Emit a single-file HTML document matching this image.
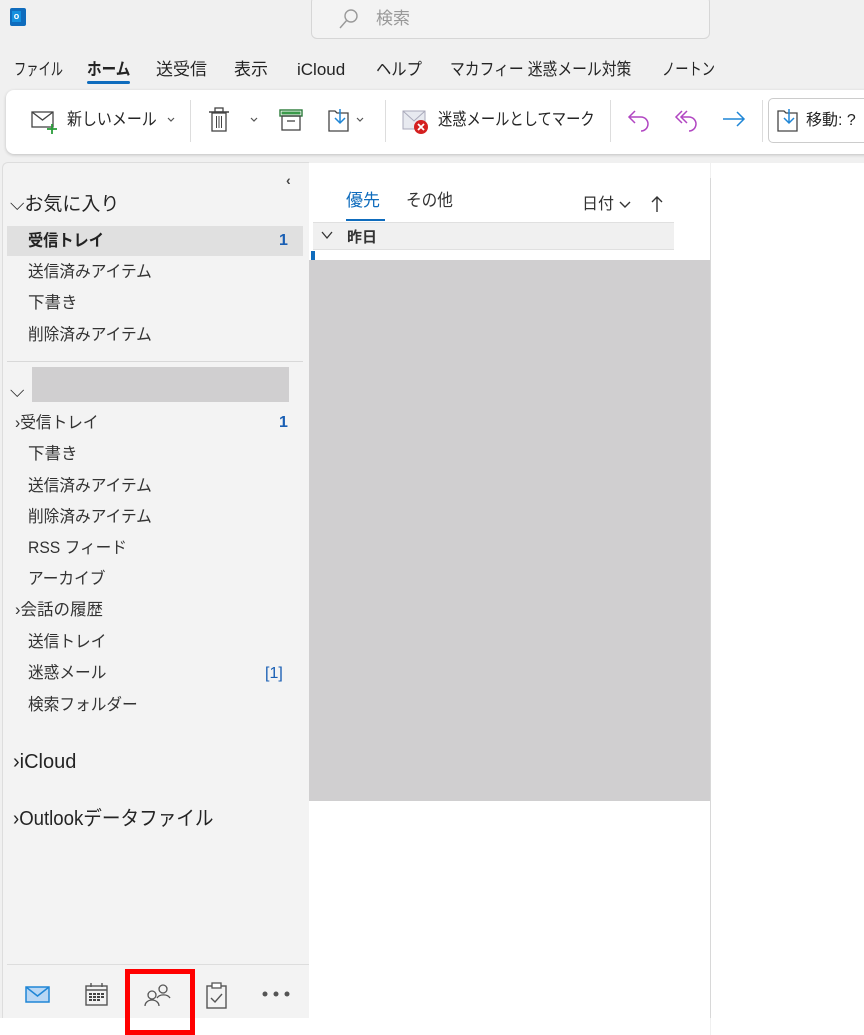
<!DOCTYPE html>
<html><head><meta charset="utf-8">
<style>
*{margin:0;padding:0;box-sizing:border-box}
body{width:864px;height:1035px;background:#f0f0f0;position:relative;overflow:hidden;font-family:"Liberation Sans","Noto Sans CJK JP",sans-serif;color:#242424}
.a{position:absolute;white-space:nowrap;line-height:20px}
.f{font-size:17px;transform-origin:0 0}
.fl{font-size:16.5px;color:#333;transform-origin:0 0}
.cnt{color:#1a5fb4;font-weight:bold;font-size:16px}
</style></head><body>
<div class="a" style="left:10px;top:8px;width:16px;height:18px;background:#0f6cbd;border-radius:2px"></div>
<div class="a" style="left:12px;top:11px;width:9px;height:11px;background:#1490df;color:#fff;font-size:9px;font-weight:bold;text-align:center;line-height:11px">o</div>
<div class="a" style="left:311px;top:-4px;width:399px;height:43px;background:#f3f3f3;border:1px solid #d6d6d6;border-radius:6px"></div>
<svg class="a" style="left:338px;top:8px" width="22" height="22"><circle cx="13" cy="8" r="6" fill="none" stroke="#999" stroke-width="1.4"/><line x1="9" y1="12" x2="2" y2="20" stroke="#999" stroke-width="1.4"/></svg>
<div class="a" style="left:376px;top:9px;font-size:17px;color:#999">検索</div>
<div class="a f" style="left:14px;top:60px;transform:scaleX(.72)">ファイル</div>
<div class="a f" style="left:87px;top:60px;font-weight:bold;transform:scaleX(.86)">ホーム</div>
<div class="a" style="left:87px;top:81px;width:43px;height:3px;background:#0f6cbd;border-radius:2px"></div>
<div class="a f" style="left:156px;top:60px">送受信</div>
<div class="a f" style="left:234px;top:60px">表示</div>
<div class="a f" style="left:297px;top:60px">iCloud</div>
<div class="a f" style="left:376px;top:60px;transform:scaleX(.9)">ヘルプ</div>
<div class="a f" style="left:450px;top:60px;transform:scaleX(.87)">マカフィー 迷惑メール対策</div>
<div class="a f" style="left:662px;top:60px;transform:scaleX(.78)">ノートン</div>
<div class="a" style="left:6px;top:90px;width:870px;height:64px;background:#fff;border-radius:8px;box-shadow:0 1px 3px rgba(0,0,0,.2)"></div>
<svg class="a" style="left:30px;top:109px" width="28" height="26"><rect x="2" y="3" width="21" height="15" fill="none" stroke="#444" stroke-width="1.3"/><polyline points="2,3 12.5,11 23,3" fill="none" stroke="#444" stroke-width="1.3"/><line x1="22" y1="15" x2="22" y2="25" stroke="#2a9d3a" stroke-width="1.8"/><line x1="17" y1="20" x2="27" y2="20" stroke="#2a9d3a" stroke-width="1.8"/></svg>
<div class="a f" style="left:67px;top:110px;transform:scaleX(.88)">新しいメール</div>
<svg class="a" style="left:166px;top:116px" width="10" height="8"><polyline points="2,2 5,5 8,2" fill="none" stroke="#555" stroke-width="1.2"/></svg>
<div class="a" style="left:190px;top:100px;width:1px;height:42px;background:#ddd"></div>
<svg class="a" style="left:207px;top:107px" width="24" height="26"><line x1="2" y1="5" x2="22" y2="5" stroke="#444" stroke-width="1.4"/><rect x="8" y="1" width="8" height="4" fill="none" stroke="#444" stroke-width="1.3"/><rect x="5" y="6" width="14" height="18" fill="none" stroke="#444" stroke-width="1.3"/><line x1="9.5" y1="9" x2="9.5" y2="21" stroke="#444"/><line x1="12" y1="9" x2="12" y2="21" stroke="#444"/><line x1="14.5" y1="9" x2="14.5" y2="21" stroke="#444"/></svg>
<svg class="a" style="left:249px;top:116px" width="10" height="8"><polyline points="2,2 5,5 8,2" fill="none" stroke="#555" stroke-width="1.2"/></svg>
<svg class="a" style="left:278px;top:108px" width="26" height="24"><rect x="2" y="2" width="22" height="6" fill="#fff" stroke="#2a7a3a" stroke-width="1.4"/><rect x="3.5" y="3.5" width="19" height="3" fill="#3a9a4a"/><rect x="4" y="8" width="18" height="14" fill="none" stroke="#444" stroke-width="1.3"/><line x1="9" y1="13" x2="17" y2="13" stroke="#444" stroke-width="1.3"/></svg>
<svg class="a" style="left:326px;top:106px" width="26" height="28"><path d="M3 5h6l2 2h11v18H3z" fill="none" stroke="#444" stroke-width="1.3"/><line x1="14" y1="3" x2="14" y2="17" stroke="#1f86d6" stroke-width="1.5"/><polyline points="9,12 14,17 19,12" fill="none" stroke="#1f86d6" stroke-width="1.5"/></svg>
<svg class="a" style="left:355px;top:116px" width="10" height="8"><polyline points="2,2 5,5 8,2" fill="none" stroke="#555" stroke-width="1.2"/></svg>
<div class="a" style="left:385px;top:100px;width:1px;height:42px;background:#ddd"></div>
<svg class="a" style="left:401px;top:107px" width="30" height="28"><path d="M2 4h22v18H2z" fill="#e8eaf0" stroke="#aab" /><polyline points="2,4 13,14 24,4" fill="none" stroke="#aab"/><circle cx="20" cy="20" r="7" fill="#d42020"/><path d="M17 17l6 6M23 17l-6 6" stroke="#fff" stroke-width="1.8"/></svg>
<div class="a f" style="left:438px;top:110px;transform:scaleX(.84)">迷惑メールとしてマーク</div>
<div class="a" style="left:610px;top:100px;width:1px;height:42px;background:#ddd"></div>
<svg class="a" style="left:626px;top:107px" width="28" height="26"><path d="M9 4L3 10l6 6" fill="none" stroke="#b146c2" stroke-width="1.5"/><path d="M3 10h12a7 7 0 0 1 0 14" fill="none" stroke="#b146c2" stroke-width="1.5"/></svg>
<svg class="a" style="left:672px;top:107px" width="30" height="26"><path d="M10 4L4 10l6 6M15 4L9 10l6 6" fill="none" stroke="#b146c2" stroke-width="1.5"/><path d="M9 10h8a7 7 0 0 1 0 14" fill="none" stroke="#b146c2" stroke-width="1.5"/></svg>
<svg class="a" style="left:720px;top:107px" width="28" height="26"><path d="M3 12h21M17 5l7 7-7 7" fill="none" stroke="#1f86d6" stroke-width="1.5"/></svg>
<div class="a" style="left:762px;top:100px;width:1px;height:42px;background:#ddd"></div>
<div class="a" style="left:768px;top:98px;width:110px;height:45px;border:1px solid #ccc;border-radius:5px"></div>
<svg class="a" style="left:775px;top:106px" width="26" height="28"><path d="M3 5h6l2 2h11v18H3z" fill="none" stroke="#444" stroke-width="1.3"/><line x1="14" y1="3" x2="14" y2="17" stroke="#1f86d6" stroke-width="1.5"/><polyline points="9,12 14,17 19,12" fill="none" stroke="#1f86d6" stroke-width="1.5"/></svg>
<div class="a" style="left:806px;top:111px;font-size:16px">移動: ?</div>
<div class="a" style="left:2px;top:162px;width:307px;height:856px;background:#f3f3f3;border-radius:6px 0 0 0;border-left:1px solid #ddd;border-top:1px solid #ddd"></div>
<div class="a" style="left:0;top:1018px;width:309px;height:17px;background:#fff"></div>
<div class="a" style="left:286px;top:170px;font-size:14px;color:#444;font-weight:bold">&#8249;</div>
<div class="a" style="left:10px;top:195px;font-size:19px">⌵お気に入り</div>
<div class="a" style="left:7px;top:226px;width:296px;height:30px;background:#e0e0e0"></div>
<div class="a fl" style="left:28px;top:231px;font-weight:bold;color:#222;transform:scaleX(.92)">受信トレイ</div>
<div class="a cnt" style="left:279px;top:231px">1</div>
<div class="a fl" style="left:28px;top:262px;transform:scaleX(.95)">送信済みアイテム</div>
<div class="a fl" style="left:28px;top:293px">下書き</div>
<div class="a fl" style="left:28px;top:325px;transform:scaleX(.95)">削除済みアイテム</div>
<div class="a" style="left:7px;top:361px;width:296px;height:1px;background:#d8d8d8"></div>
<div class="a" style="left:10px;top:382px;font-size:19px">⌵</div>
<div class="a" style="left:32px;top:367px;width:257px;height:35px;background:#d0cfd0"></div>
<div class="a fl" style="left:15px;top:413px;transform:scaleX(.95)">›受信トレイ</div>
<div class="a cnt" style="left:279px;top:413px">1</div>
<div class="a fl" style="left:28px;top:444px">下書き</div>
<div class="a fl" style="left:28px;top:476px;transform:scaleX(.95)">送信済みアイテム</div>
<div class="a fl" style="left:28px;top:507px;transform:scaleX(.95)">削除済みアイテム</div>
<div class="a fl" style="left:28px;top:538px;transform:scaleX(.95)">RSS フィード</div>
<div class="a fl" style="left:28px;top:569px;transform:scaleX(.95)">アーカイブ</div>
<div class="a fl" style="left:15px;top:600px">›会話の履歴</div>
<div class="a fl" style="left:28px;top:632px;transform:scaleX(.95)">送信トレイ</div>
<div class="a fl" style="left:28px;top:663px;transform:scaleX(.95)">迷惑メール</div>
<div class="a" style="left:265px;top:664px;color:#1a5fb4;font-size:16px">[1]</div>
<div class="a fl" style="left:28px;top:695px;transform:scaleX(.95)">検索フォルダー</div>
<div class="a" style="left:13px;top:752px;font-size:20px">›iCloud</div>
<div class="a" style="left:13px;top:809px;font-size:20px;transform:scaleX(.93);transform-origin:0 0">›Outlookデータファイル</div>
<div class="a" style="left:7px;top:964px;width:302px;height:1px;background:#ddd"></div>
<svg class="a" style="left:25px;top:985px" width="26" height="20"><rect x="1" y="2" width="23" height="15" fill="#b9d7f4" stroke="#1f86d6" stroke-width="1.5"/><polyline points="1,2 12.5,11 24,2" fill="none" stroke="#1f86d6" stroke-width="1.5"/></svg>
<svg class="a" style="left:84px;top:982px" width="26" height="26"><rect x="2" y="4" width="21" height="19" fill="none" stroke="#555" stroke-width="1.4"/><line x1="2" y1="8" x2="23" y2="8" stroke="#555" stroke-width="1.4"/><line x1="7" y1="1" x2="7" y2="5" stroke="#555" stroke-width="1.4"/><line x1="18" y1="1" x2="18" y2="5" stroke="#555" stroke-width="1.4"/><g fill="#444"><rect x="5" y="11" width="3" height="2"/><rect x="9" y="11" width="3" height="2"/><rect x="13" y="11" width="3" height="2"/><rect x="17" y="11" width="3" height="2"/><rect x="5" y="14" width="3" height="2"/><rect x="9" y="14" width="3" height="2"/><rect x="13" y="14" width="3" height="2"/><rect x="17" y="14" width="3" height="2"/><rect x="5" y="17" width="3" height="2"/><rect x="9" y="17" width="3" height="2"/><rect x="13" y="17" width="3" height="2"/></g></svg>
<svg class="a" style="left:142px;top:982px" width="30" height="26"><circle cx="10" cy="13" r="4" fill="none" stroke="#555" stroke-width="1.3"/><path d="M3 24a7 6 0 0 1 14 0" fill="none" stroke="#555" stroke-width="1.3"/><circle cx="21" cy="7" r="4" fill="none" stroke="#555" stroke-width="1.3"/><path d="M15 16a7 5 0 0 1 13 0" fill="none" stroke="#555" stroke-width="1.3"/></svg>
<div class="a" style="left:125px;top:969px;width:70px;height:66px;border:5px solid #f00"></div>
<svg class="a" style="left:204px;top:982px" width="26" height="28"><rect x="3" y="4" width="19" height="22" fill="none" stroke="#555" stroke-width="1.4"/><rect x="8" y="1" width="9" height="5" fill="#fff" stroke="#555" stroke-width="1.3"/><polyline points="7,16 11,20 18,12" fill="none" stroke="#555" stroke-width="1.4"/></svg>
<svg class="a" style="left:261px;top:990px" width="30" height="8"><circle cx="4" cy="4" r="2.5" fill="#555"/><circle cx="15" cy="4" r="2.5" fill="#555"/><circle cx="26" cy="4" r="2.5" fill="#555"/></svg>
<div class="a" style="left:309px;top:163px;width:401px;height:872px;background:#fff"></div>
<div class="a" style="left:346px;top:191px;font-size:17px;color:#0f6cbd">優先</div>
<div class="a" style="left:346px;top:219px;width:39px;height:2px;background:#0f6cbd"></div>
<div class="a" style="left:406px;top:191px;font-size:17px;color:#333;transform:scaleX(.92);transform-origin:0 0">その他</div>
<div class="a" style="left:582px;top:195px;font-size:16px;color:#333">日付</div>
<svg class="a" style="left:618px;top:200px" width="14" height="10"><polyline points="2,2 7,7 12,2" fill="none" stroke="#333" stroke-width="1.4"/></svg>
<svg class="a" style="left:650px;top:194px" width="14" height="20"><path d="M7 18V3M2 8l5-5 5 5" fill="none" stroke="#333" stroke-width="1.4"/></svg>
<div class="a" style="left:313px;top:222px;width:361px;height:28px;background:#f0f0f0;border-top:1px solid #e0e0e0;border-bottom:1px solid #e0e0e0"></div>
<svg class="a" style="left:321px;top:231px" width="12" height="9"><polyline points="1,1 6,7 11,1" fill="none" stroke="#333" stroke-width="1.3"/></svg>
<div class="a" style="left:347px;top:228px;font-size:15px;font-weight:bold;color:#333">昨日</div>
<div class="a" style="left:311px;top:251px;width:4px;height:9px;background:#0f6cbd"></div>
<div class="a" style="left:309px;top:260px;width:401px;height:541px;background:#d0cfd0"></div>
<div class="a" style="left:710px;top:178px;width:1px;height:840px;background:#d8d8d8"></div>
<div class="a" style="left:711px;top:163px;width:153px;height:872px;background:#fff"></div>
</body></html>
